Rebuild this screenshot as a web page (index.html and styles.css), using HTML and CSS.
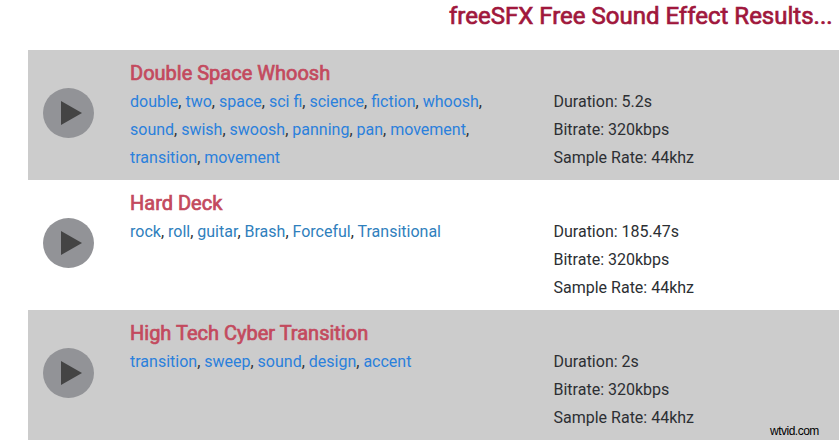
FILE: index.html
```html
<!DOCTYPE html>
<html lang="en">
<head>
    <meta charset="UTF-8">
    <title>freeSFX</title>
    <link rel="stylesheet" href="styles.css">
</head>
<body>
    <h1>freeSFX Free Sound Effect Results...</h1>
    <div class="results">
        <div class="result">
            <svg class="play" viewBox="0 0 52 52"><ellipse cx="25.5" cy="26" rx="25.5" ry="25"/><path d="M18 14v24l21-12z"/></svg>
            <div class="info">
                <h2>Double Space Whoosh</h2>
                <p class="tags"><a>double</a>, <a>two</a>, <a>space</a>, <a>sci fi</a>, <a>science</a>, <a>fiction</a>, <a>whoosh</a>,<br><a>sound</a>, <a>swish</a>, <a>swoosh</a>, <a>panning</a>, <a>pan</a>, <a>movement</a>,<br><a>transition</a>, <a>movement</a></p>
            </div>
            <div class="details">
                <div>Duration: 5.2s</div>
                <div>Bitrate: 320kbps</div>
                <div>Sample Rate: 44khz</div>
            </div>
        </div>
        <div class="result">
            <svg class="play" viewBox="0 0 52 52"><ellipse cx="25.5" cy="26" rx="25.5" ry="25"/><path d="M18 14v24l21-12z"/></svg>
            <div class="info">
                <h2>Hard Deck</h2>
                <p class="tags"><a>rock</a>, <a>roll</a>, <a>guitar</a>, <a>Brash</a>, <a>Forceful</a>, <a>Transitional</a></p>
            </div>
            <div class="details">
                <div>Duration: 185.47s</div>
                <div>Bitrate: 320kbps</div>
                <div>Sample Rate: 44khz</div>
            </div>
        </div>
        <div class="result">
            <svg class="play" viewBox="0 0 52 52"><ellipse cx="25.5" cy="26" rx="25.5" ry="25"/><path d="M18 14v24l21-12z"/></svg>
            <div class="info">
                <h2>High Tech Cyber Transition</h2>
                <p class="tags"><a>transition</a>, <a>sweep</a>, <a>sound</a>, <a>design</a>, <a>accent</a></p>
            </div>
            <div class="details">
                <div>Duration: 2s</div>
                <div>Bitrate: 320kbps</div>
                <div>Sample Rate: 44khz</div>
            </div>
        </div>
    </div>
    <div class="watermark">wtvid.com</div>
</body>
</html>
```
FILE: styles.css
```css
body {
    margin: 0;
    height: 441px;
    overflow: hidden;
    background-color: #fff;
    color: #2c2f33;
    font-family: Roboto, sans-serif;
    font-size: 16px;
    line-height: 28px;
}

h1 {
    margin: 0;
    height: 50px;
    padding-left: 449px;
    box-sizing: border-box;
    color: #a0173c;
    font-size: 24px;
    font-weight: 400;
    line-height: 33px;
    white-space: nowrap;
    -webkit-text-stroke: 0.7px #a0173c;
}

.results {
    margin-left: 28px;
}

.result {
    display: flex;
    height: 130px;
    box-sizing: border-box;
    padding: 9px 0 0 15px;
}

.result:nth-child(odd) {
    background-color: #ccc;
}

.play {
    width: 52px;
    height: 52px;
    margin-top: 28px;
}

.play ellipse {
    fill: #929397;
}

.play path {
    fill: #444;
}

.info {
    width: 423.5px;
    margin-left: 35px;
    white-space: nowrap;
}

h2 {
    margin: 0;
    color: #c34a5e;
    font-size: 20px;
    font-weight: 400;
    line-height: 29px;
    -webkit-text-stroke: 0.7px #c34a5e;
}

.tags {
    margin: 0;
}

a {
    color: #2a80dc;
}

.result:nth-child(even) a {
    color: #2f80bd;
}

.details {
    padding-top: 29px;
}

.watermark {
    position: absolute;
    left: 770px;
    bottom: 3px;
    color: #000;
    font-family: "Liberation Sans", sans-serif;
    font-size: 12px;
    line-height: 14px;
    letter-spacing: -0.5px;
}
```
